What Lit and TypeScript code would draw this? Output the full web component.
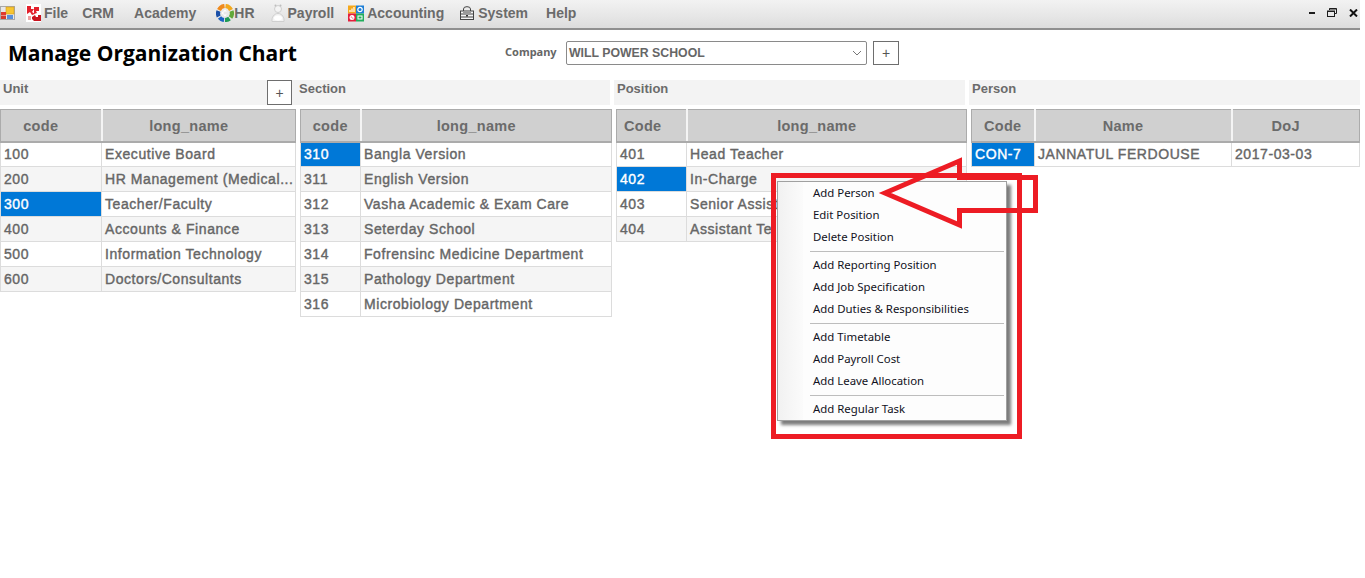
import { LitElement, html, css, svg } from "lit";
import { customElement } from "lit/decorators.js";

type Col = { label: string; width: number; pad: number };
type Panel = {
  title: string; width: number; plus?: boolean; cols: Col[];
  rows: string[][]; selected: number;
};

const PANELS: Panel[] = [
  { title: "Unit", width: 296, plus: true, selected: 2,
    cols: [{ label: "code", width: 101, pad: 20 }, { label: "long_name", width: 194, pad: 20 }],
    rows: [["100","Executive Board"],["200","HR Management (Medical..."],["300","Teacher/Faculty"],["400","Accounts & Finance"],["500","Information Technology"],["600","Doctors/Consultants"]] },
  { title: "Section", width: 312, selected: 0,
    cols: [{ label: "code", width: 60, pad: 0 }, { label: "long_name", width: 251, pad: 20 }],
    rows: [["310","Bangla Version"],["311","English Version"],["312","Vasha Academic & Exam Care"],["313","Seterday School"],["314","Fofrensinc Medicine Department"],["315","Pathology Department"],["316","Microbiology Department"]] },
  { title: "Position", width: 351, selected: 1,
    cols: [{ label: "Code", width: 70, pad: 17 }, { label: "long_name", width: 280, pad: 20 }],
    rows: [["401","Head Teacher"],["402","In-Charge"],["403","Senior Assist"],["404","Assistant Te"]] },
  { title: "Person", width: 389, selected: 0,
    cols: [{ label: "Code", width: 63, pad: 0 }, { label: "Name", width: 197, pad: 20 }, { label: "DoJ", width: 128, pad: 20 }],
    rows: [["CON-7","JANNATUL FERDOUSE","2017-03-03"]] },
];

const MENU: string[][] = [
  ["Add Person","Edit Position","Delete Position"],
  ["Add Reporting Position","Add Job Specification","Add Duties & Responsibilities"],
  ["Add Timetable","Add Payroll Cost","Add Leave Allocation"],
  ["Add Regular Task"],
];

const icons: Record<string, unknown> = {
  app: svg`<svg width="15" height="16" viewBox="0 0 15 16"><rect x="0.5" y="1.5" width="14" height="13" fill="#e8e8e8" stroke="#a9a9a9"/><rect x="6" y="2" width="8" height="7" fill="#f7c531" stroke="#d39a1c" stroke-width=".6"/><rect x="1" y="7" width="5" height="3.5" fill="#e23b2e"/><rect x="1" y="11" width="5" height="3" fill="#d63a2c"/><rect x="7" y="10" width="6" height="4" fill="#5b8fd8"/></svg>`,
  file: svg`<svg width="18" height="19" viewBox="0 0 18 19"><rect width="15" height="18" fill="#fff"/><path d="M1 2h4v3h3l-2 3 3 2-3 1-2-3-3 2z" fill="#e3202c"/><path d="M8 3h5v4h-3l1 2-3 1z" fill="#e3202c"/><path d="M6 13l3-2 1 2h2v-2h3v6H8l-2-2z" fill="#c9141f"/><path d="M2 12l3 0 0 4-3 0z" fill="#f0a0a0"/></svg>`,
  hr: svg`<svg width="18" height="18" viewBox="0 0 18 18"><g fill="none" stroke-width="4.200"><path d="M3 6A7 7 0 0 1 8.500 2" stroke="#ef8a1d"/><path d="M9.500 2A7 7 0 0 1 15 6" stroke="#f2a91e"/><path d="M15.500 7A7 7 0 0 1 14.500 13.500" stroke="#62a83a"/><path d="M13.500 14.500A7 7 0 0 1 9 16" stroke="#1f9a55"/><path d="M8 16A7 7 0 0 1 3.500 13.500" stroke="#1c62c4"/><path d="M2.700 12.500A7 7 0 0 1 2.500 7" stroke="#1a4fa8"/></g><path d="M9 5.500l2 2H7zM5.500 9l2-2v4zM9 12.500l-2-2h4z" fill="#fff"/></svg>`,
  payroll: svg`<svg width="18" height="20" viewBox="0 0 18 20"><circle cx="8" cy="6" r="3.500" fill="#f4f4f4" stroke="#cfcfcf"/><circle cx="5.500" cy="2.500" r="1" fill="#bdbdbd"/><circle cx="10.500" cy="2.500" r="1" fill="#bdbdbd"/><path d="M2 18.500c-.5-4 2-8 6-8s6.500 4 6 8z" fill="#f2f2f2" stroke="#cfcfcf"/><ellipse cx="8" cy="15" rx="4" ry="2.500" fill="#fff"/></svg>`,
  accounting: svg`<svg width="19" height="17" viewBox="1 0 19 17"><rect x="1" y="0.5" width="8" height="8" fill="#f5a81c"/><rect x="9" y="0.5" width="8" height="8" fill="#1c7ed6"/><rect x="1" y="8.500" width="8" height="8" fill="#e3203c"/><rect x="9" y="8.500" width="8" height="8" fill="#21ad5c"/><path d="M3 7V5M5 7V3.500M7 7V2" stroke="#fff" stroke-width="1.200"/><circle cx="13" cy="4.500" r="2.200" fill="none" stroke="#fff" stroke-width="1.200"/><circle cx="5" cy="12.500" r="2.500" fill="#fff"/><circle cx="4.300" cy="12" r=".6" fill="#e3203c"/><circle cx="5.800" cy="13" r=".6" fill="#e3203c"/><rect x="11" y="11" width="4" height="3" fill="none" stroke="#fff"/></svg>`,
  system: svg`<svg width="18" height="15" viewBox="2 0 18 15"><path d="M5.500 5V3a3 2 0 0 1 7 0v2" fill="none" stroke="#444"/><rect x="2.500" y="5" width="13" height="8.500" fill="#f4f4f4" stroke="#444"/><path d="M2 8h14M2 11h14" stroke="#444"/><rect x="5" y="6" width="8" height="1" fill="#999"/><rect x="8" y="9" width="2" height="1.500" fill="#333"/></svg>`,
  min: svg`<svg width="6" height="4" viewBox="0 0 6 4"><rect y="1" width="6" height="2" fill="#1c1c1c"/></svg>`,
  restore: svg`<svg width="10" height="9" viewBox="0 0 10 9"><path d="M2.500 2V.5h7v5H8" fill="none" stroke="#1c1c1c"/><path d="M2.500 1h7" stroke="#1c1c1c"/><rect x=".5" y="3" width="7" height="5.500" fill="none" stroke="#1c1c1c"/><path d="M.5 3.500h7" stroke="#1c1c1c"/></svg>`,
  close: svg`<svg width="9" height="8" viewBox="0 0 9 8"><path d="M1 .5l7 7M8 .5l-7 7" stroke="#111" stroke-width="2"/></svg>`,
};

const MENUBAR: [string, string, number][] = [
  ["file", "File", 11], ["", "CRM", 14], ["", "Academy", 20], ["hr", "HR", 20], ["payroll", "Payroll", 15],
  ["accounting", "Accounting", 14], ["system", "System", 16], ["", "Help", 18],
];

@customElement("app-root")
export class AppRoot extends LitElement {
  static styles = css`
    :host { display: block; width: 1365px; height: 578px; position: relative; overflow: hidden; background: #fff; font-family: "Liberation Sans", Arial, sans-serif; }
    .page { width: 1360px; }
    .bar { height: 28px; display: flex; align-items: center; justify-content: space-between; border-bottom: 2px solid #8f8f8f; background: linear-gradient(#f2f2f2, #e6e6e6 60%, #dcdcdc); }
    .menus { display: flex; align-items: center; height: 26px; padding-bottom: 2px; }
    .app { display: flex; }
    .mi { display: flex; align-items: center; font: bold 14px "Liberation Sans", sans-serif; color: #6b6b6b; white-space: nowrap; }
    .mi svg { display: block; }
    .win { display: flex; align-items: center; gap: 12px; padding-right: 2px; padding-bottom: 3px; }
    .head { display: flex; align-items: center; height: 46px; margin-bottom: 4px; }
    h1 { margin: 0 0 0 8px; width: 497px; font: bold 21px "Open Sans", sans-serif; color: #000; white-space: nowrap; }
    .clabel { font: bold 11px "Noto Sans", sans-serif; line-height: 14px; padding-bottom: 2px; color: #666; margin-right: 10px; width: 51px; white-space: nowrap; }
    .select { width: 301px; height: 24px; border: 1px solid #8a8a8a; border-radius: 2px; display: flex; align-items: center; justify-content: space-between; font: bold 12.300px "Liberation Sans", sans-serif; color: #666; padding: 0 0 0 2px; margin-right: 6px; box-sizing: border-box; }
    .select svg { margin-right: 4px; }
    .plus { box-sizing: border-box; width: 26px; height: 24px; border: 1px solid #6e6e6e; background: #fff; display: flex; align-items: center; justify-content: center; font: 14px "Liberation Sans", sans-serif; color: #555; }
    .panels { display: flex; gap: 4px; align-items: flex-start; }
    .panel { flex: none; }
    .ptitle { height: 25px; background: #f3f3f3; display: flex; justify-content: space-between; font: bold 13px "Liberation Sans", sans-serif; color: #6b6b6b; padding-left: 3px; box-sizing: border-box; margin-bottom: 4px; line-height: 17px; }
    .panel:nth-child(2) .ptitle { margin: 0 2px 4px -4px; }
    .panel:nth-child(3) .ptitle { margin: 0 2px 4px -2px; }
    .panel:nth-child(4) .ptitle { margin: 0 0 4px -2px; }
    .ptitle .plus { margin-right: 4px; width: 25px; height: 25px; }
    table { border-collapse: collapse; table-layout: fixed; width: 100%; font: 14px "Liberation Sans", sans-serif; letter-spacing: .57px; -webkit-text-stroke: .4px #666; color: #666; }
    th { background: #d0d0d0; height: 32px; padding: 2px 0 0; font: bold 14.500px "Liberation Sans", sans-serif; letter-spacing: .3px; -webkit-text-stroke: 0; color: #6b6b6b; border: 1px solid #ababab; border-left: 2px solid #f4f4f4; border-bottom: 2px solid #ababab; box-sizing: border-box; text-align: center; }
    th:first-child { border-left: 1px solid #ababab; }
    td { height: 25px; padding: 0 3px; border: 1px solid #dcdcdc; box-sizing: border-box; white-space: nowrap; overflow: hidden; }
    tr:nth-child(even) td { background: #f5f5f5; }
    td.sel, tr:nth-child(even) td.sel { background: #0078d7; color: #fff; -webkit-text-stroke: .4px #fff; }
    .menu { position: absolute; left: 777px; top: 181px; width: 230px; height: 240px; box-sizing: border-box; background: #fdfdfd; border: 1px solid #a0a0a0; box-shadow: 4px 4px 3px rgba(80,80,80,.75); display: flex; flex-direction: column; }
    .menu::before { content: ""; position: absolute; left: 0; top: 0; bottom: 0; width: 25px; background: linear-gradient(90deg, #f1f1f1, #fbfbfb); }
    .item { height: 22px; flex: none; display: flex; align-items: center; padding-left: 35px; font: 11.400px "Noto Sans", sans-serif; line-height: 14px; color: #111122; position: relative; white-space: nowrap; }
    .sep { flex: none; height: 1px; background: #bdbdbd; margin: 3px 2px 2px 32px; position: relative; }
    .note { position: absolute; left: 0; top: 0; pointer-events: none; }
  `;

  private panel(p: Panel) {
    return html`<section class="panel" style="width:${p.width}px">
      <div class="ptitle"><span>${p.title}</span>${p.plus ? html`<div class="plus">+</div>` : ""}</div>
      <table>
        <colgroup>${p.cols.map((c) => html`<col style="width:${c.width}px" />`)}</colgroup>
        <thead><tr>${p.cols.map((c) => html`<th style="padding-right:${c.pad}px">${c.label}</th>`)}</tr></thead>
        <tbody>${p.rows.map((r, i) => html`<tr>${r.map((v, j) => html`<td class=${i === p.selected && j === 0 ? "sel" : ""}>${v}</td>`)}</tr>`)}</tbody>
      </table>
    </section>`;
  }

  render() {
    return html`
      <div class="page">
        <div class="bar">
          <div class="menus">
            <span class="app">${icons.app}</span>
            ${MENUBAR.map(([ic, t, gap]) => html`<div class="mi" style="margin-left:${gap}px">${ic ? icons[ic] : ""}<span>${t}</span></div>`)}
          </div>
          <div class="win">${icons.min}${icons.restore}${icons.close}</div>
        </div>
        <div class="head">
          <h1>Manage Organization Chart</h1>
          <div class="clabel">Company</div>
          <div class="select"><span>WILL POWER SCHOOL</span><svg width="10" height="6" viewBox="0 0 10 6"><path d="M1 1l4 4 4-4" fill="none" stroke="#777"/></svg></div>
          <div class="plus">+</div>
        </div>
        <div class="panels">${PANELS.map((p) => this.panel(p))}</div>
      </div>
      <div class="menu">
        ${MENU.map((g, i) => html`${i ? html`<div class="sep"></div>` : ""}${g.map((t) => html`<div class="item">${t}</div>`)}`)}
      </div>
      <svg class="note" width="1365" height="578" viewBox="0 0 1365 578" fill="none" stroke="#ed1c24" stroke-width="5">
        <rect x="773.500" y="175.500" width="246" height="261" />
        <path d="M885 193L959.500 161V177.500H1035.500V210.500H959.500V225Z" />
      </svg>
    `;
  }
}
